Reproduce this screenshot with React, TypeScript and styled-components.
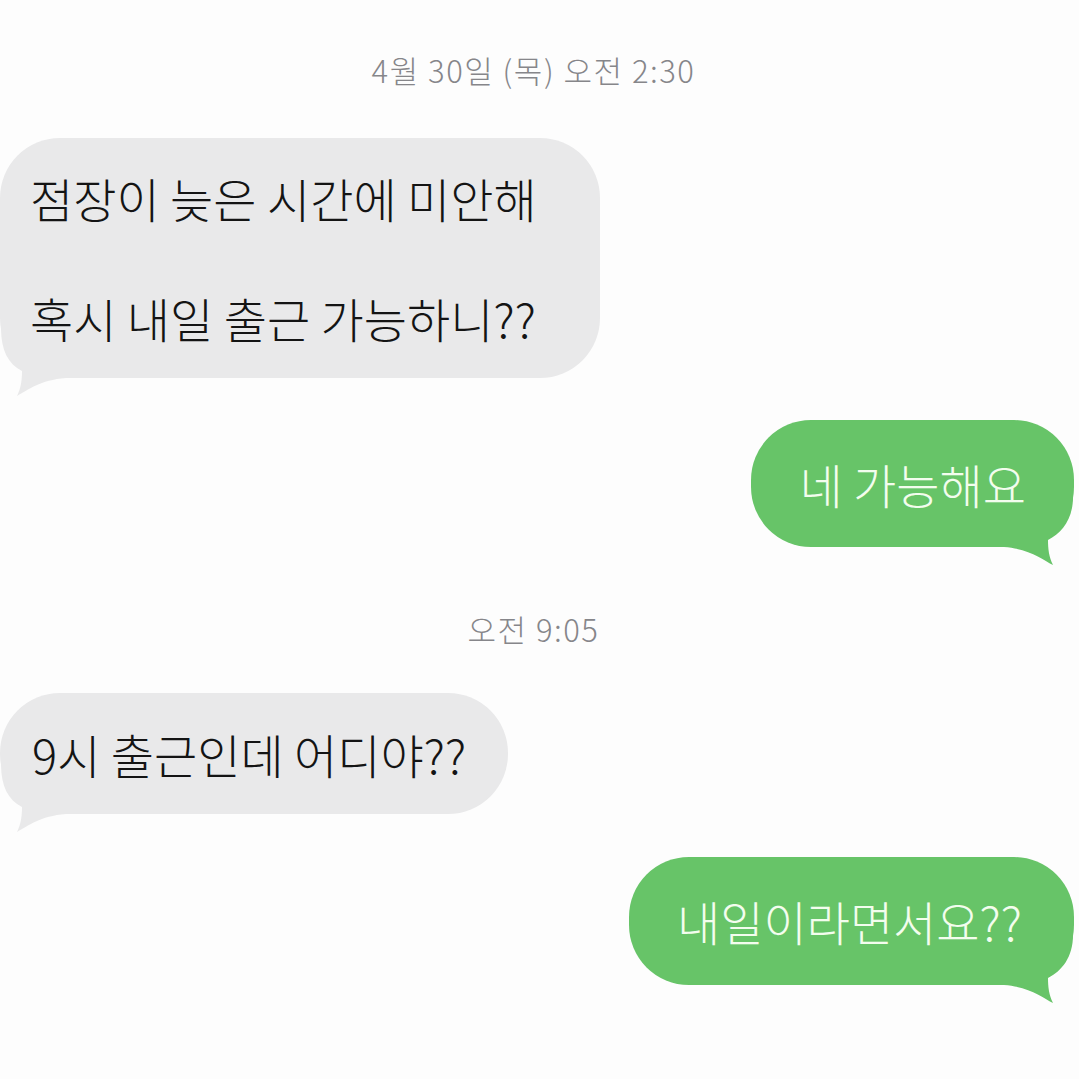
import React from 'react';
import styled, { createGlobalStyle } from 'styled-components';

const GlobalStyle = createGlobalStyle`
  html, body {
    margin: 0;
    padding: 0;
    background: #ffffff;
  }
  body {
    font-family: 'Noto Sans CJK KR', 'Noto Sans', sans-serif;
  }
`;

const GRAY = '#e9e9ea';
const GREEN = '#67c468';

const Screen = styled.div`
  width: 1079px;
  height: 1079px;
  overflow: hidden;
  background: #fdfdfd;
  display: flex;
  flex-direction: column;
  padding-top: 50px;
  box-sizing: border-box;
`;

const Stamp = styled.div<{ $gap: number }>`
  margin-top: ${p => p.$gap}px;
  padding-right: 12px;
  text-align: center;
  font-size: 31px;
  font-weight: 300;
  line-height: 40px;
  letter-spacing: 1.5px;
  color: #86868a;
`;

const Row = styled.div<{ $gap: number; $out?: boolean; $edge: number }>`
  display: flex;
  justify-content: ${p => (p.$out ? 'flex-end' : 'flex-start')};
  margin-top: ${p => p.$gap}px;
  padding-left: ${p => (p.$out ? 0 : p.$edge)}px;
  padding-right: ${p => (p.$out ? p.$edge : 0)}px;
`;

const Bubble = styled.div<{ $out?: boolean; $h: number; $pad: string }>`
  position: relative;
  display: flex;
  flex-direction: column;
  justify-content: space-around;
  height: ${p => p.$h}px;
  box-sizing: border-box;
  background: ${p => (p.$out ? GREEN : GRAY)};
  color: ${p => (p.$out ? '#f3fdee' : '#141414')};
  border-radius: 60px;
  padding: ${p => p.$pad};
  font-size: 47px;
  font-weight: 300;
  line-height: 60px;
  white-space: nowrap;

  svg {
    position: absolute;
    bottom: -20px;
    ${p => (p.$out ? 'right: 0;' : 'left: 0;')}
  }
`;

const Line = styled.span`
  display: block;
  position: relative;
  z-index: 1;
`;

// speech tail for the bubble's lower corner; mirrored for outgoing bubbles
const Tail = ({ out, dx = 0 }: { out?: boolean; dx?: number }) => {
  const x = (v: number) => (out ? 80 - v : v);
  const d = `M${x(1)} -50 C${x(1)} -28 ${x(8 + dx)} -14 ${x(22 + dx)} -7 C${x(22 + dx)} 2 ${x(21 + dx)} 10 ${x(17 + dx)} 18 C${x(28 + dx)} 12 ${x(40 + dx)} 2 ${x(66 + dx)} 0 L${x(66 + dx)} -50 Z`;
  return (
    <svg width='80' height='70' viewBox='0 -50 80 70'>
      <path d={d} fill={out ? GREEN : GRAY} />
    </svg>
  );
};

type Msg = {
  lines: string[];
  out?: boolean;
  gap: number;
  edge: number;
  h: number;
  pad: string;
  tail?: number;
};

const Message = ({ lines, out, gap, edge, h, pad, tail }: Msg) => (
  <Row $gap={gap} $out={out} $edge={edge}>
    <Bubble $out={out} $h={h} $pad={pad}>
      {lines.map(l => (
        <Line key={l}>{l}</Line>
      ))}
      <Tail out={out} dx={tail} />
    </Bubble>
  </Row>
);

export default function App() {
  return (
    <>
      <GlobalStyle />
      <Screen>
        <Stamp $gap={0}>4월 30일 (목) 오전 2:30</Stamp>
        <Message
          gap={48}
          edge={0}
          h={240}
          pad='0 63px 0 30px'
          lines={['점장이 늦은 시간에 미안해', '혹시 내일 출근 가능하니??']}
        />
        <Message out gap={42} edge={5} h={127} pad='0 48px 0 48px' tail={4} lines={['네 가능해요']} />
        <Stamp $gap={62}>오전 9:05</Stamp>
        <Message gap={44} edge={0} h={121} pad='0 42px 0 32px' lines={['9시 출근인데 어디야??']} />
        <Message out gap={43} edge={5} h={128} pad='0 52px 0 48px' tail={4} lines={['내일이라면서요??']} />
      </Screen>
    </>
  );
}
